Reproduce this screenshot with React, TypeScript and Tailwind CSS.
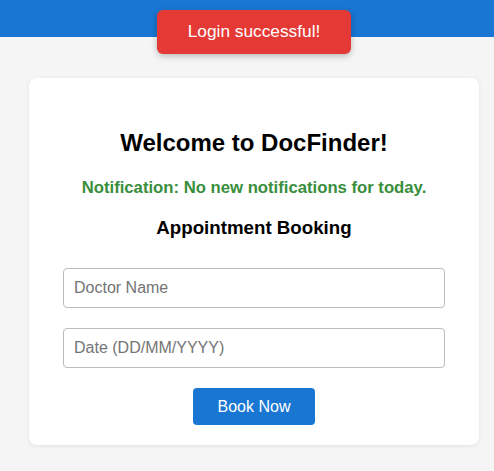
import React from 'react'

export default function App() {
  return (
    <div className="relative min-h-[471px] bg-[#f5f5f5] font-['Liberation_Sans',Arial,sans-serif]">
      {/* Top bar */}
      <div className="h-[37px] bg-[#1976d2]" />

      {/* Toast */}
      <div className="absolute left-[157px] top-[10px] flex h-[44px] w-[194px] items-center justify-center rounded-[6px] bg-[#e53935] text-[17.3px] text-white shadow-[0_2px_6px_rgba(0,0,0,0.25)]">
        Login successful!
      </div>

      {/* Card */}
      <div className="mx-[29px] mt-[41px] flex w-[450px] flex-col items-center rounded-[8px] bg-white px-[34px] pt-[51px] pb-[20px] shadow-[0_1px_4px_rgba(0,0,0,0.08)]">
        <h2 className="text-[24px] leading-[28px] font-bold text-black">Welcome to DocFinder!</h2>
        <p className="mt-[21px] text-[16.7px] leading-[20px] font-bold text-[#388e3c]">
          <span>Notification:</span> No new notifications for today.
        </p>
        <h3 className="mt-[19px] text-[18.72px] leading-[22px] font-bold text-black">Appointment Booking</h3>

        <input
          type="text"
          placeholder="Doctor Name"
          className="mt-[29px] h-[40px] w-full rounded-[4px] border border-[#bbbbbb] px-[10px] text-[16px] text-black placeholder:text-[#757575] outline-none"
        />
        <input
          type="text"
          placeholder="Date (DD/MM/YYYY)"
          className="mt-[20px] h-[40px] w-full rounded-[4px] border border-[#bbbbbb] px-[10px] text-[16px] text-black placeholder:text-[#757575] outline-none"
        />
        <button className="mt-[20px] h-[37px] w-[122px] rounded-[4px] bg-[#1976d2] text-[16px] text-white">
          Book Now
        </button>
      </div>
    </div>
  )
}
